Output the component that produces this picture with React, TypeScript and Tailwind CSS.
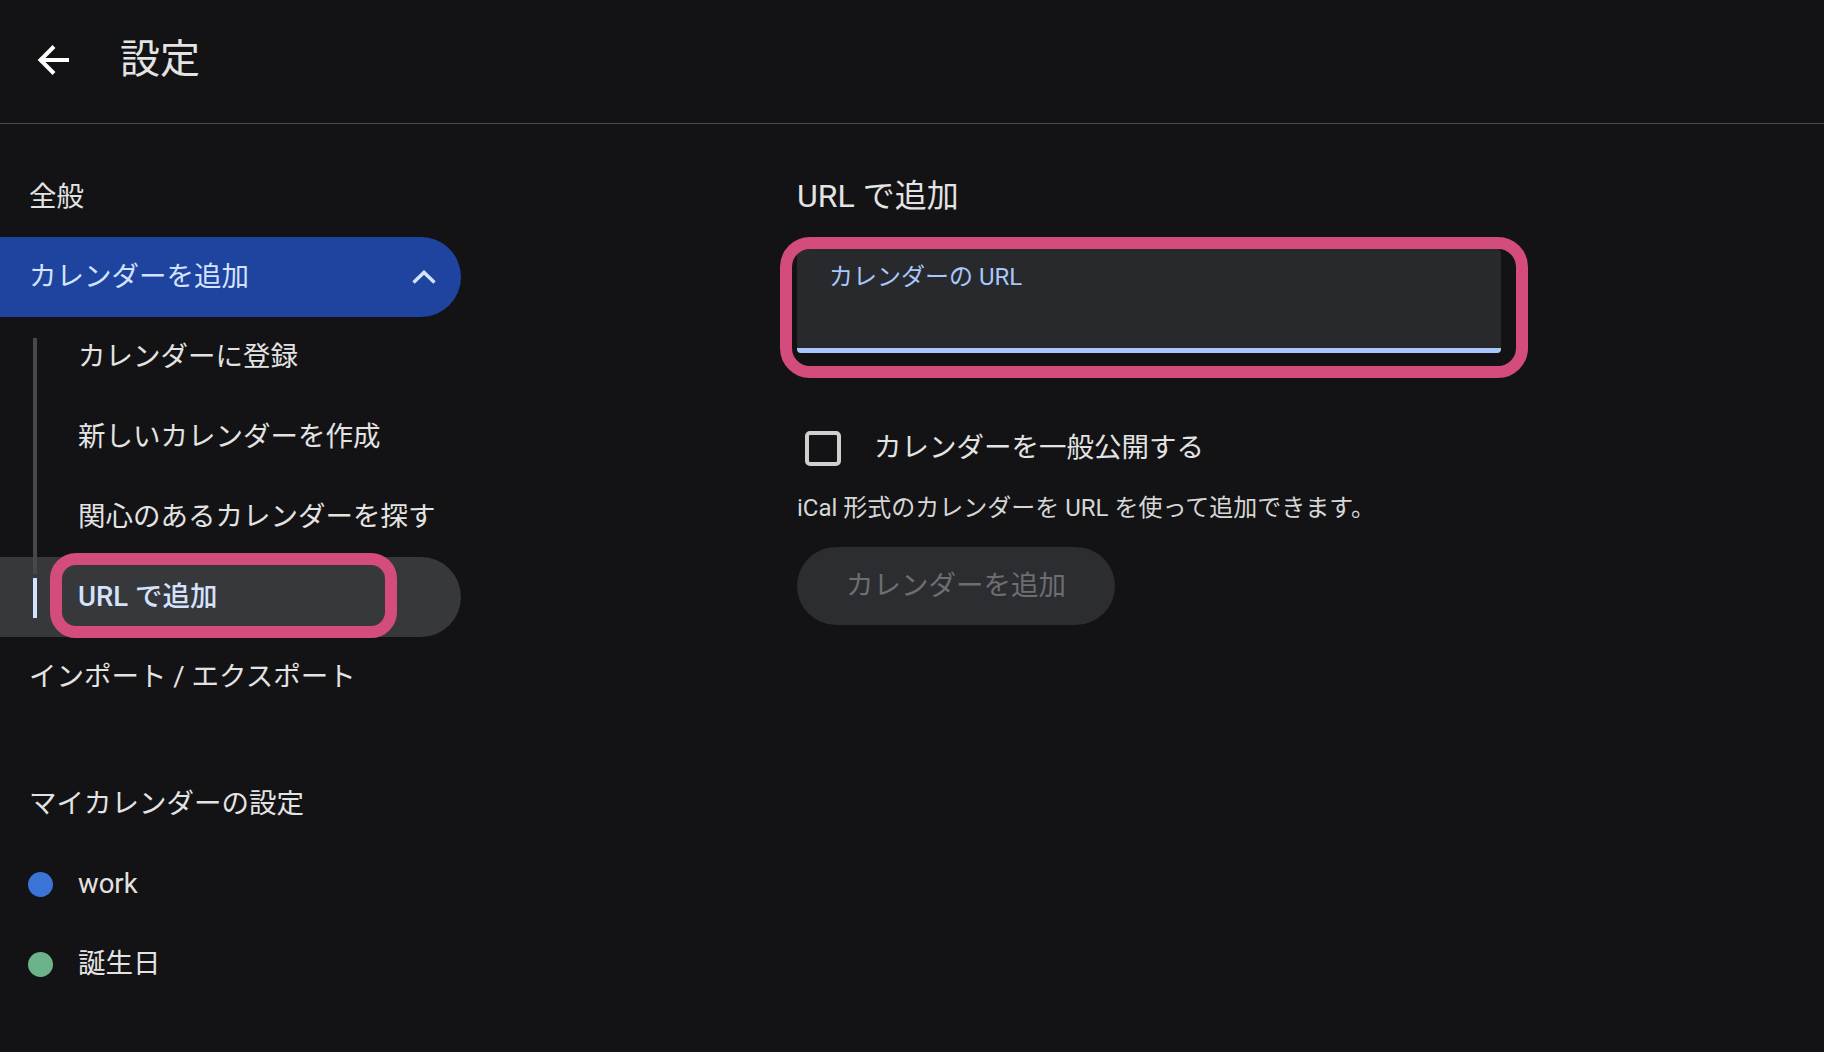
import React from "react";

function BackArrow() {
    return (
        <svg width="32" height="32" viewBox="0 0 32 32" fill="none" className="shrink-0 -mt-[4px]">
            <path d="M32 16H4" stroke="#ffffff" strokeWidth="4" />
            <path d="M17 2.5L3.5 16L17 29.5" stroke="#ffffff" strokeWidth="4" />
        </svg>
    );
}

function ChevronUp() {
    return (
        <svg width="24" height="14" viewBox="0 0 24 14" fill="none">
            <path d="M1.5 12.5L12 2.5L22.5 12.5" stroke="#d3e3fd" strokeWidth="3.5" />
        </svg>
    );
}

const subItems = ["カレンダーに登録", "新しいカレンダーを作成", "関心のあるカレンダーを探す"];

export default function App() {
    return (
        <div className="min-h-screen bg-[#131315] text-[#e3e3e3] font-['Roboto','Noto_Sans_CJK_JP',sans-serif]">
            {/* header */}
            <header className="h-[124px] border-b border-[#4a4a4d] flex items-center pl-[37px]">
                <BackArrow />
                <h1 className="ml-[51px] text-[40px] leading-[48px] font-normal -mt-[4px]">設定</h1>
            </header>

            <div className="flex">
                {/* sidebar */}
                <aside className="w-[461px] shrink-0 pt-[33px] text-[27.5px]">
                    <div className="h-20 flex items-center pl-[29px]">全般</div>
                    <div className="h-20 flex items-center justify-between pl-[29px] pr-[25px] bg-[#1f44a0] rounded-r-full text-[#d3e3fd]">
                        <span>カレンダーを追加</span>
                        <ChevronUp />
                    </div>

                    {subItems.map((label, i) => (
                        <div key={label} className="h-20 flex items-stretch pl-[33px]">
                            <div className={`w-[4px] bg-[#48484b] ${i === 0 ? "mt-[21px]" : ""}`} />
                            <div className="flex items-center pl-[41px]">{label}</div>
                        </div>
                    ))}

                    <div className="relative h-20 flex items-stretch pl-[33px] bg-[#37383b] rounded-r-full">
                        <div className="w-[4px] flex flex-col">
                            <div className="h-[17px] bg-[#48484b]" />
                            <div className="mt-[4px] h-[40px] bg-[#d3e3fd]" />
                        </div>
                        <div className="flex items-center pl-[41px] font-medium text-[#d3e3fd]">URL で追加</div>
                        <div className="pointer-events-none absolute left-[50px] top-[-4px] w-[347px] h-[85px] rounded-[26px] border-[12px] border-[#d44c7c]" />
                    </div>

                    <div className="h-20 flex items-center pl-[29px]">インポート / エクスポート</div>

                    <div className="mt-[47px] h-20 flex items-center pl-[29px]">マイカレンダーの設定</div>
                    <div className="h-20 flex items-center pl-[28px]">
                        <span className="w-[25px] h-[25px] rounded-full bg-[#3a74d7]" />
                        <span className="ml-[25px]">work</span>
                    </div>
                    <div className="h-20 flex items-center pl-[28px]">
                        <span className="w-[25px] h-[25px] rounded-full bg-[#6db38a]" />
                        <span className="ml-[25px]">誕生日</span>
                    </div>
                </aside>

                {/* main */}
                <main className="ml-[336px] pt-[51px] w-[704px]">
                    <h2 className="text-[32px] leading-[42px] font-normal">URL で追加</h2>

                    <div className="relative mt-[31px]">
                        <div className="h-[105px] bg-[#28292c] rounded-t-[6px] rounded-b-[4px] border-b-[5px] border-[#a8c7fa] pl-[32px] pt-[13px]">
                            <span className="text-[24px] leading-[32px] text-[#a8c7fa]">カレンダーの URL</span>
                        </div>
                        <div className="pointer-events-none absolute left-[-17px] top-[-11px] right-[-27px] bottom-[-25px] rounded-[30px] border-[12px] border-[#d44c7c]" />
                    </div>

                    <label className="mt-[76px] h-[38px] flex items-center">
                        <span className="ml-[8px] w-[36px] h-[35px] rounded-[5px] border-[4px] border-[#cfcfcf]" />
                        <span className="ml-[33px] text-[27.5px] leading-[38px]">カレンダーを一般公開する</span>
                    </label>

                    <p className="mt-[25px] text-[24px] leading-[32px] text-[#d6d6d6]">
                        iCal 形式のカレンダーを URL を使って追加できます。
                    </p>

                    <button
                        disabled
                        className="mt-[23px] h-[78px] px-[49px] rounded-full bg-[#2c2d30] text-[27.5px] text-[#6d6e71]"
                    >
                        カレンダーを追加
                    </button>
                </main>
            </div>
        </div>
    );
}
